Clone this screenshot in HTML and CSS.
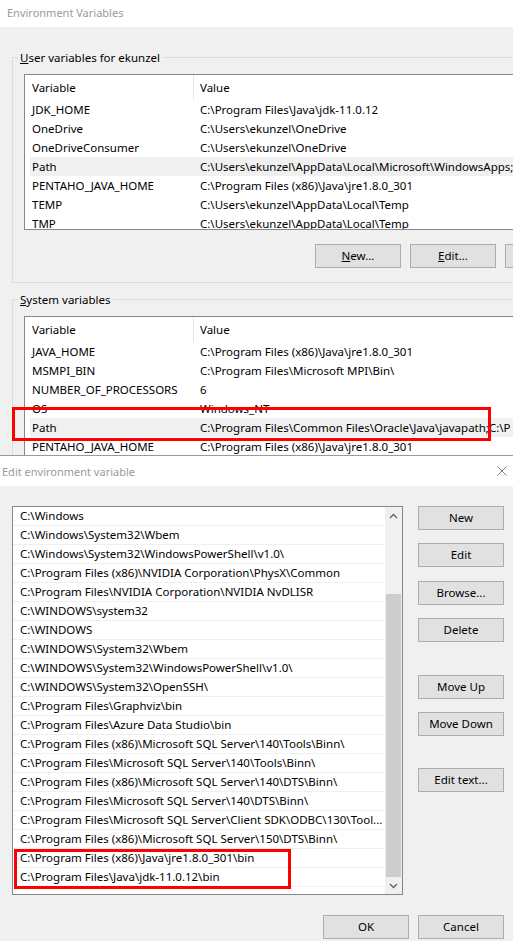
FILE: index.html
```html
<!DOCTYPE html>
<html>
<head>
<meta charset="utf-8">
<link rel="stylesheet" href="styles.css">
</head>
<body>
<div class="win env">
  <div class="titlebar env-title">Environment Variables</div>
  <div class="env-body">
    <div class="group">
      <div class="glabel"><u>U</u>ser variables for ekunzel</div>
      <div class="listview">
        <div class="lv-header"><div class="c1">Variable</div><div class="c2">Value</div></div>
        <div class="lv-row"><div class="c1">JDK_HOME</div><div class="c2">C:\Program Files\Java\jdk-11.0.12</div></div>
        <div class="lv-row"><div class="c1">OneDrive</div><div class="c2">C:\Users\ekunzel\OneDrive</div></div>
        <div class="lv-row"><div class="c1">OneDriveConsumer</div><div class="c2">C:\Users\ekunzel\OneDrive</div></div>
        <div class="lv-row sel"><div class="c1">Path</div><div class="c2">C:\Users\ekunzel\AppData\Local\Microsoft\WindowsApps;</div></div>
        <div class="lv-row"><div class="c1">PENTAHO_JAVA_HOME</div><div class="c2">C:\Program Files (x86)\Java\jre1.8.0_301</div></div>
        <div class="lv-row"><div class="c1">TEMP</div><div class="c2">C:\Users\ekunzel\AppData\Local\Temp</div></div>
        <div class="lv-row"><div class="c1">TMP</div><div class="c2">C:\Users\ekunzel\AppData\Local\Temp</div></div>
      </div>
      <div class="btnrow">
        <button class="btn"><u>N</u>ew...</button>
        <button class="btn"><u>E</u>dit...</button>
        <button class="btn"></button>
      </div>
    </div>
    <div class="group group2">
      <div class="glabel"><u>S</u>ystem variables</div>
      <div class="listview tall">
        <div class="lv-header"><div class="c1">Variable</div><div class="c2">Value</div></div>
        <div class="lv-row"><div class="c1">JAVA_HOME</div><div class="c2">C:\Program Files (x86)\Java\jre1.8.0_301</div></div>
        <div class="lv-row"><div class="c1">MSMPI_BIN</div><div class="c2">C:\Program Files\Microsoft MPI\Bin\</div></div>
        <div class="lv-row"><div class="c1">NUMBER_OF_PROCESSORS</div><div class="c2">6</div></div>
        <div class="lv-row"><div class="c1">OS</div><div class="c2">Windows_NT</div></div>
        <div class="lv-row sel"><div class="c1">Path</div><div class="c2">C:\Program Files\Common Files\Oracle\Java\javapath;C:\P</div></div>
        <div class="lv-row"><div class="c1">PENTAHO_JAVA_HOME</div><div class="c2">C:\Program Files (x86)\Java\jre1.8.0_301</div></div>
      </div>
    </div>
  </div>
  <div class="mark mark1"></div>
</div>

<div class="win edit">
  <div class="titlebar edit-title">
    <span>Edit environment variable</span>
    <svg class="close" width="10" height="10" viewBox="0 0 10 10"><path d="M0.5 0.5 L9.5 9.5 M9.5 0.5 L0.5 9.5" stroke="#808080" stroke-width="1" fill="none"/></svg>
  </div>
  <div class="edit-body">
    <div class="pathlist">
      <div class="rows">
        <div class="prow">C:\Windows</div>
        <div class="prow">C:\Windows\System32\Wbem</div>
        <div class="prow">C:\Windows\System32\WindowsPowerShell\v1.0\</div>
        <div class="prow">C:\Program Files (x86)\NVIDIA Corporation\PhysX\Common</div>
        <div class="prow">C:\Program Files\NVIDIA Corporation\NVIDIA NvDLISR</div>
        <div class="prow">C:\WINDOWS\system32</div>
        <div class="prow">C:\WINDOWS</div>
        <div class="prow">C:\WINDOWS\System32\Wbem</div>
        <div class="prow">C:\WINDOWS\System32\WindowsPowerShell\v1.0\</div>
        <div class="prow">C:\WINDOWS\System32\OpenSSH\</div>
        <div class="prow">C:\Program Files\Graphviz\bin</div>
        <div class="prow">C:\Program Files\Azure Data Studio\bin</div>
        <div class="prow">C:\Program Files (x86)\Microsoft SQL Server\140\Tools\Binn\</div>
        <div class="prow">C:\Program Files\Microsoft SQL Server\140\Tools\Binn\</div>
        <div class="prow">C:\Program Files (x86)\Microsoft SQL Server\140\DTS\Binn\</div>
        <div class="prow">C:\Program Files\Microsoft SQL Server\140\DTS\Binn\</div>
        <div class="prow">C:\Program Files\Microsoft SQL Server\Client SDK\ODBC\130\Tool...</div>
        <div class="prow">C:\Program Files (x86)\Microsoft SQL Server\150\DTS\Binn\</div>
        <div class="prow">C:\Program Files (x86)\Java\jre1.8.0_301\bin</div>
        <div class="prow">C:\Program Files\Java\jdk-11.0.12\bin</div>
      </div>
      <div class="scrollbar">
        <div class="sb-arrow"><svg width="9" height="6" viewBox="0 0 9 6"><path d="M1 5 L4.5 1.5 L8 5" stroke="#606060" stroke-width="1.3" fill="none"/></svg></div>
        <div class="sb-space"></div>
        <div class="sb-thumb"></div>
        <div class="sb-arrow"><svg width="9" height="6" viewBox="0 0 9 6"><path d="M1 1 L4.5 4.5 L8 1" stroke="#606060" stroke-width="1.3" fill="none"/></svg></div>
      </div>
    </div>
    <div class="btncol">
      <button class="btn">New</button>
      <button class="btn m13">Edit</button>
      <button class="btn m14">Browse...</button>
      <button class="btn m13">Delete</button>
      <button class="btn m33">Move Up</button>
      <button class="btn m13">Move Down</button>
      <button class="btn m32">Edit text...</button>
    </div>
  </div>
  <div class="footer">
    <button class="btn">OK</button>
    <button class="btn">Cancel</button>
  </div>
  <div class="mark mark2"></div>
</div>
</body>
</html>
```

FILE: styles.css
```css
html, body {
  margin: 0;
  padding: 0;
  width: 513px;
  height: 941px;
  overflow: hidden;
  background: #f0f0f0;
}
body {
  font-family: "Noto Sans", "Open Sans", sans-serif;
  font-size: 11.5px;
  color: #000;
}
.win {
  position: relative;
  background: #f0f0f0;
}
.env {
  width: 620px;
  height: 455px;
  overflow: hidden;
}
.titlebar {
  background: #fff;
  color: #9a9a9a;
  display: flex;
  align-items: center;
  white-space: nowrap;
  font-size: 11px;
}
.env-title {
  height: 27px;
  line-height: 25px;
  padding-left: 7px;
  align-items: flex-start;
}
.env-body {
  padding-left: 12px;
}
.group {
  border: 1px solid #dcdcdc;
  margin-top: 30px;
  margin-right: 20px;
  padding-bottom: 14px;
}
.group2 {
  margin-top: 16px;
}
.glabel {
  margin: -8px 0 0 5px;
  padding: 0 2px;
  background: #f0f0f0;
  width: max-content;
  line-height: 16px;
  height: 16px;
}
.listview {
  margin: 8px 0 0 11px;
  height: 154px;
  border: 1px solid #828790;
  background: #fff;
  overflow: hidden;
}
.listview.tall {
  height: 139px;
}
.lv-header {
  display: flex;
  height: 25px;
  line-height: 25px;
  padding-left: 5px;
  white-space: nowrap;
}
.lv-header .c1 {
  width: 161px;
  padding-left: 2px;
  border-right: 1px solid #e5e5e5;
}
.lv-row {
  display: flex;
  height: 19px;
  line-height: 19px;
  margin-left: 5px;
  white-space: nowrap;
}
.lv-row .c1 {
  width: 162px;
  padding-left: 2px;
  flex: none;
}
.c2 {
  padding-left: 6px;
  flex: none;
}
.lv-row.sel {
  background: #f0f0f0;
}
.btnrow {
  display: flex;
  gap: 9px;
  margin-top: 14px;
  padding-left: 302px;
}
.btn {
  width: 86px;
  height: 24px;
  box-sizing: border-box;
  background: #e1e1e1;
  border: 1px solid #adadad;
  border-radius: 0;
  padding: 0;
  margin: 0;
  font-family: inherit;
  font-size: 11.5px;
  color: #000;
  line-height: 22px;
  flex: none;
}
.mark {
  position: absolute;
  border: 3px solid #ff0000;
  box-sizing: border-box;
  pointer-events: none;
}
.mark1 {
  left: 12px;
  top: 407px;
  width: 479px;
  height: 34px;
}

/* Edit dialog */
.edit {
  height: 485px;
  border-top: 1px solid #9a9a9a;
}
.edit-title {
  height: 30px;
  padding-left: 2px;
}
.close {
  margin-left: auto;
  margin-right: 6px;
}
.edit-body {
  display: grid;
  grid-template-columns: 391px 86px;
  column-gap: 15px;
  padding: 20px 9px 0 12px;
}
.pathlist {
  height: 389px;
  box-sizing: border-box;
  border: 1px solid #828790;
  background: #fff;
  display: flex;
}
.rows {
  flex: 1;
  overflow: hidden;
  min-width: 0;
}
.prow {
  height: 18px;
  line-height: 18px;
  border-bottom: 1px solid #f0f0f0;
  padding-left: 7px;
  white-space: nowrap;
  overflow: hidden;
}
.scrollbar {
  width: 17px;
  flex: none;
  background: #f0f0f0;
  display: flex;
  flex-direction: column;
}
.sb-arrow {
  height: 17px;
  display: flex;
  align-items: center;
  justify-content: center;
}
.sb-space {
  height: 70px;
}
.sb-thumb {
  height: 283px;
  margin: 0 1px;
  background: #cdcdcd;
}
.btncol {
  display: flex;
  flex-direction: column;
}
.m13 { margin-top: 13px; }
.m14 { margin-top: 14px; }
.m32 { margin-top: 32px; }
.m33 { margin-top: 33px; }
.footer {
  display: flex;
  justify-content: flex-end;
  gap: 9px;
  padding: 20px 9px 0 0;
}
.mark2 {
  left: 14px;
  top: 393px;
  width: 277px;
  height: 40px;
}
```
